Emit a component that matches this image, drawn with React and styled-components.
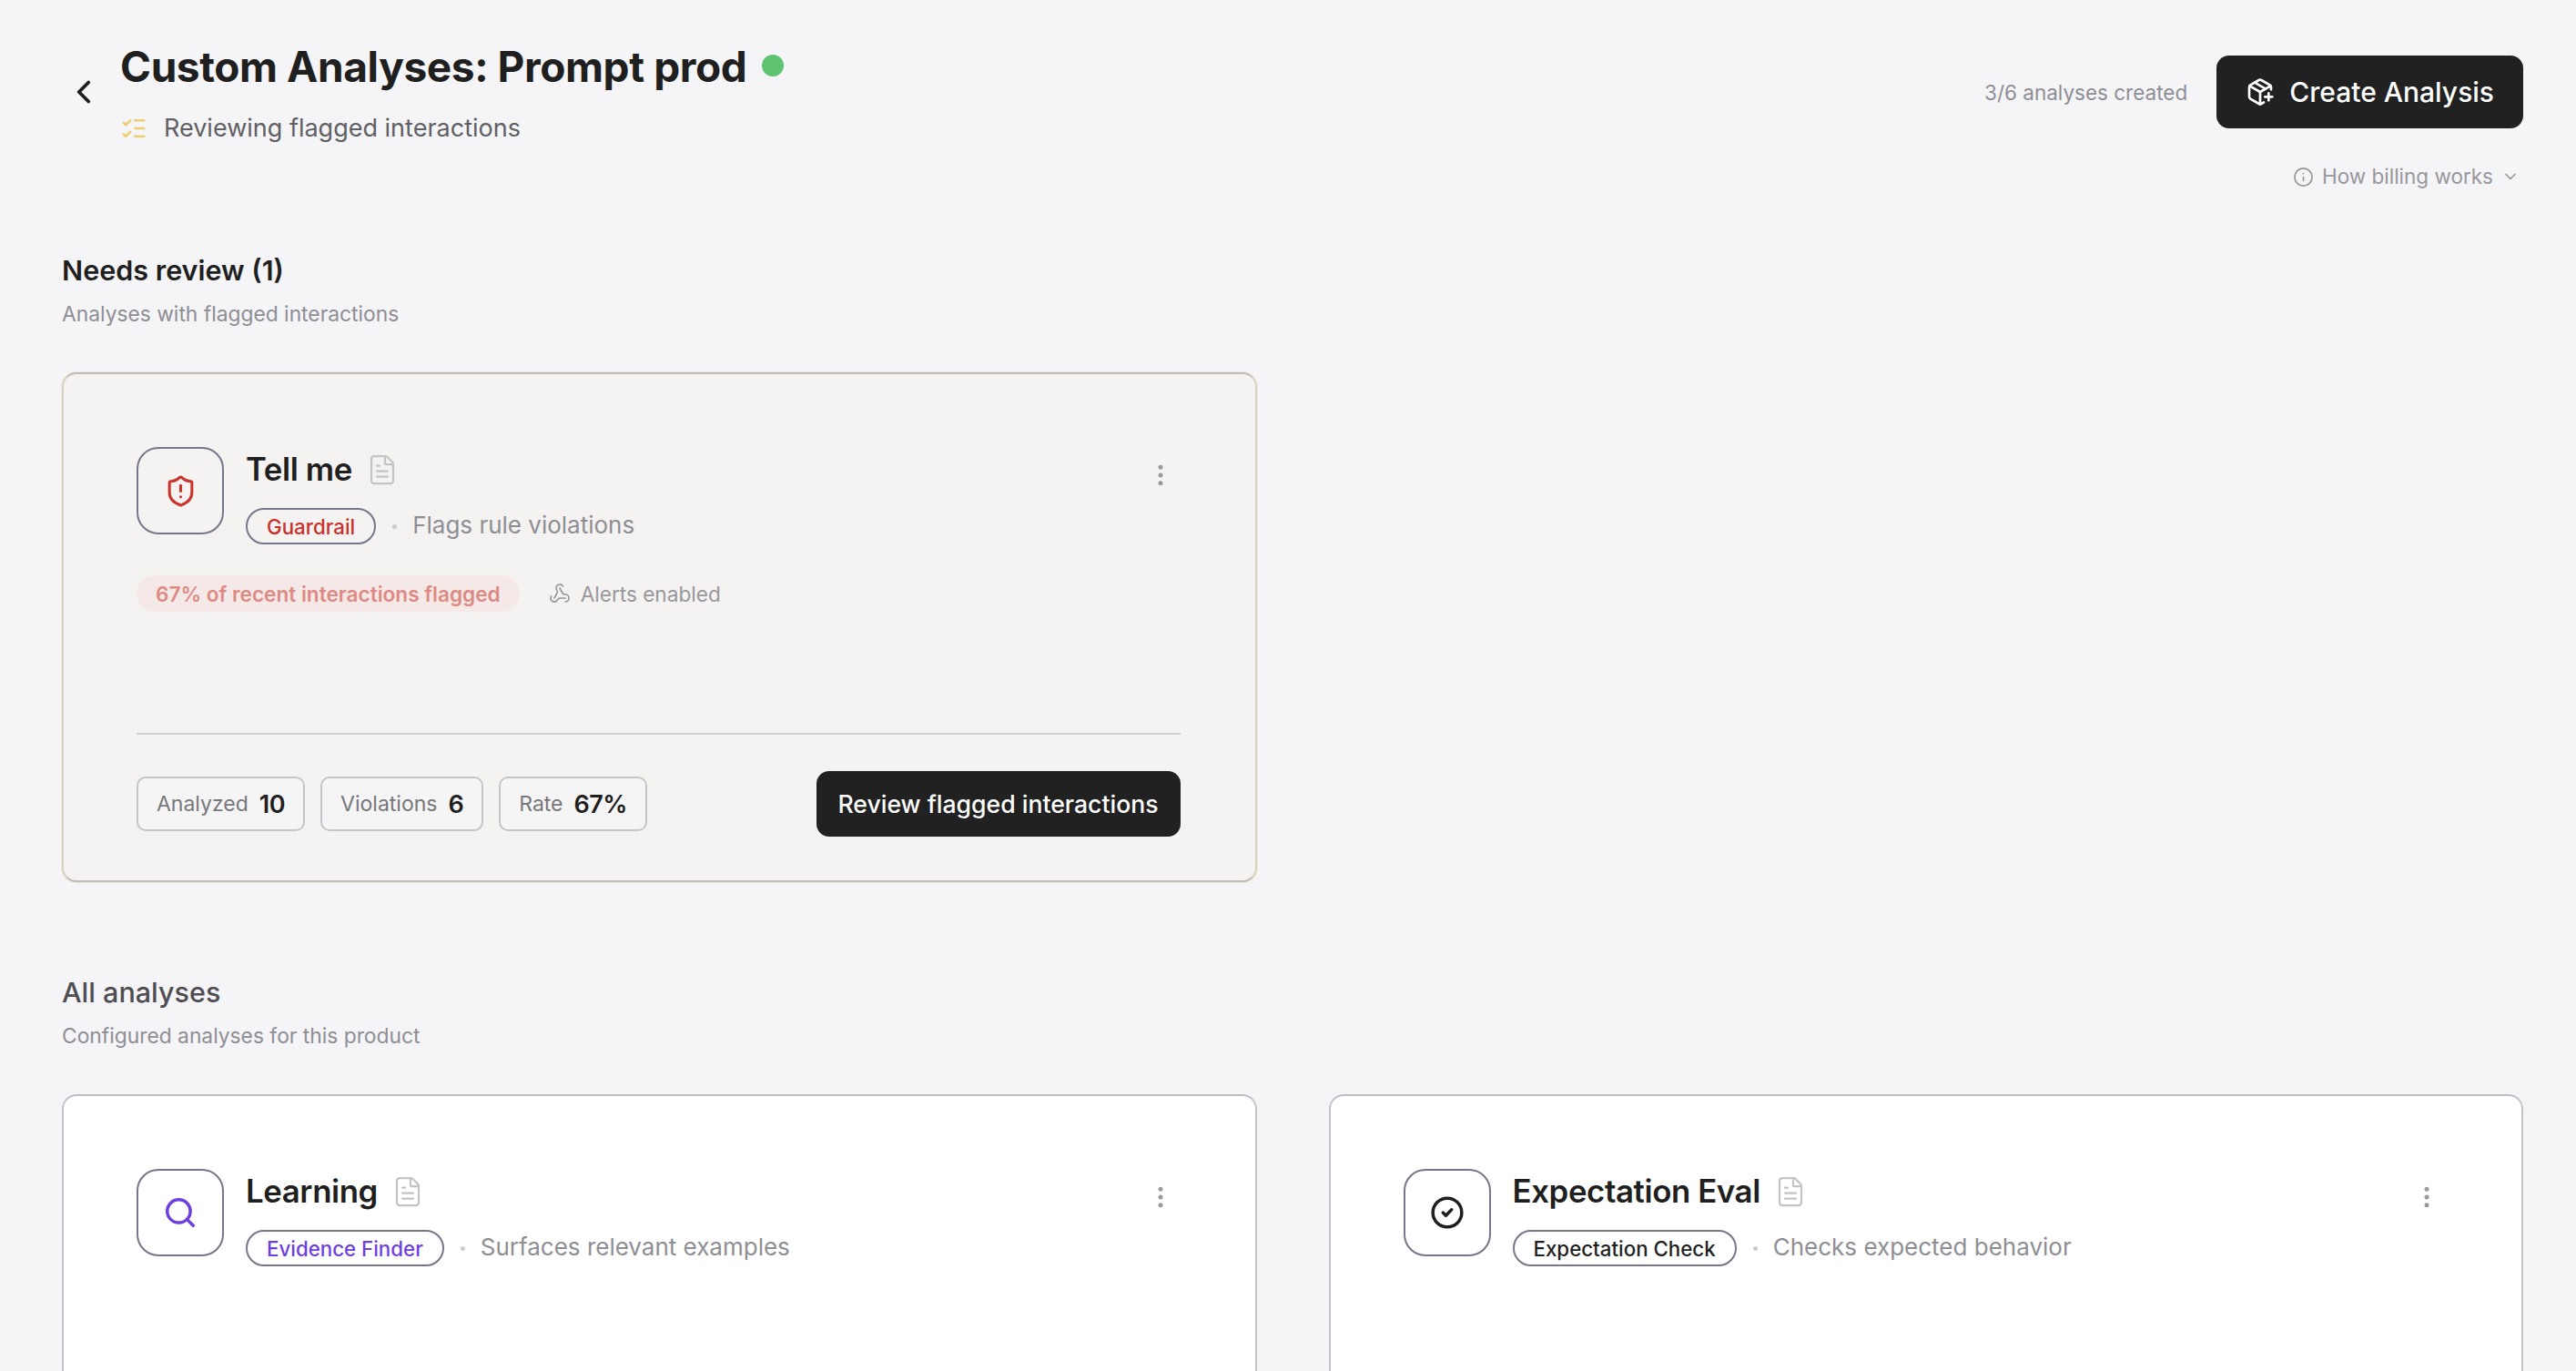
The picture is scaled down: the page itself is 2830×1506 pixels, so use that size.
import React from "react";
import styled, { createGlobalStyle } from "styled-components";
import {
  ChevronLeft,
  ChevronDown,
  ListChecks,
  PackagePlus,
  Info,
  ShieldAlert,
  FileText,
  EllipsisVertical,
  Webhook,
  Search,
  CircleCheck,
} from "lucide-react";

const Global = createGlobalStyle`
  html, body {
    margin: 0;
    height: 100%;
    overflow: hidden;
    background: #f5f5f7;
    font-family: Inter, "Noto Sans", sans-serif;
  }
  * { box-sizing: border-box; }
`;

export default function App() {
  return (
    <Page>
      <Global />
      <Header>
        <HeaderLeft>
          <BackButton>
            <ChevronLeft size={42} strokeWidth={2.2} />
          </BackButton>
          <div>
            <TitleRow>
              <Title>Custom Analyses: Prompt prod</Title>
              <StatusDot />
            </TitleRow>
            <Status>
              <ListChecks size={30} color="#efcd72" strokeWidth={2} />
              Reviewing flagged interactions
            </Status>
          </div>
        </HeaderLeft>
        <HeaderRight>
          <CreateRow>
            <Quota>3/6 analyses created</Quota>
            <CreateButton>
              <PackagePlus size={32} strokeWidth={2} />
              Create Analysis
            </CreateButton>
          </CreateRow>
          <Billing>
            <Info size={23} strokeWidth={1.8} />
            How billing works
            <ChevronDown size={20} strokeWidth={2} />
          </Billing>
        </HeaderRight>
      </Header>

      <Section>
        <Heading>Needs review (1)</Heading>
        <SubHeading>Analyses with flagged interactions</SubHeading>
        <CardGrid>
          <Card $flagged>
            <CardTop
              icon={<ShieldAlert size={37} color="#c9352d" strokeWidth={2} />}
              name="Tell me"
              tag="Guardrail"
              tagColor="#c9302a"
              desc="Flags rule violations"
            />
            <InfoRow>
              <FlagPill>67% of recent interactions flagged</FlagPill>
              <Alerts>
                <Webhook size={24} strokeWidth={1.7} />
                Alerts enabled
              </Alerts>
            </InfoRow>
            <Divider />
            <CardFooter>
              <Stats>
                <Stat>Analyzed <b>10</b></Stat>
                <Stat>Violations <b>6</b></Stat>
                <Stat>Rate <b>67%</b></Stat>
              </Stats>
              <ReviewButton>Review flagged interactions</ReviewButton>
            </CardFooter>
          </Card>
        </CardGrid>
      </Section>

      <AllSection>
        <Heading $muted>All analyses</Heading>
        <SubHeading>Configured analyses for this product</SubHeading>
        <CardGrid>
          <Card>
            <CardTop
              icon={<Search size={38} color="#6d3fe0" strokeWidth={2.2} />}
              name="Learning"
              tag="Evidence Finder"
              tagColor="#6d3fe0"
              desc="Surfaces relevant examples"
            />
          </Card>
          <Card>
            <CardTop
              icon={<CircleCheck size={38} color="#1f1f1f" strokeWidth={2.2} />}
              name="Expectation Eval"
              tag="Expectation Check"
              tagColor="#1f1f1f"
              desc="Checks expected behavior"
            />
          </Card>
        </CardGrid>
      </AllSection>
    </Page>
  );
}

function CardTop({ icon, name, tag, tagColor, desc }) {
  return (
    <TopRow>
      <IconBox>{icon}</IconBox>
      <TopText>
        <NameRow>
          <Name>{name}</Name>
          <FileText size={36} color="#c4c4c6" strokeWidth={1.5} />
        </NameRow>
        <TagRow>
          <Tag $color={tagColor}>{tag}</Tag>
          <Dot />
          <Desc>{desc}</Desc>
        </TagRow>
      </TopText>
      <Kebab>
        <EllipsisVertical size={30} strokeWidth={2} />
      </Kebab>
    </TopRow>
  );
}

const Page = styled.div`
  padding: 40px 58px 0 68px;
  height: 1506px;
  overflow: hidden;
  color: #1f1f1f;
`;

const Header = styled.header`
  display: flex;
  justify-content: space-between;
  align-items: flex-start;
`;

const HeaderLeft = styled.div`
  display: flex;
  align-items: center;
  gap: 19px;
`;

const BackButton = styled.div`
  width: 45px;
  display: flex;
  justify-content: flex-end;
  color: #1f1f1f;
`;

const TitleRow = styled.div`
  display: flex;
  align-items: center;
  gap: 17px;
`;

const Title = styled.h1`
  margin: 0;
  font-size: 46px;
  line-height: 66px;
  font-weight: 700;
  letter-spacing: -0.4px;
`;

const StatusDot = styled.span`
  width: 24px;
  height: 24px;
  border-radius: 50%;
  background: #5ec46f;
  margin-bottom: 2px;
`;

const Status = styled.div`
  display: flex;
  align-items: center;
  gap: 18px;
  margin-top: 15px;
  font-size: 27px;
  line-height: 40px;
  color: #5f5f64;
`;

const HeaderRight = styled.div`
  display: flex;
  flex-direction: column;
  align-items: flex-end;
  padding-top: 21px;
`;

const CreateRow = styled.div`
  display: flex;
  align-items: center;
  gap: 32px;
`;

const Quota = styled.span`
  font-size: 22.5px;
  color: #8e8e94;
`;

const CreateButton = styled.button`
  display: flex;
  align-items: center;
  gap: 16px;
  height: 80px;
  padding: 0 32px;
  border: none;
  border-radius: 14px;
  background: #212121;
  color: #fff;
  font-family: inherit;
  font-size: 30px;
  font-weight: 500;
`;

const Billing = styled.div`
  display: flex;
  align-items: center;
  gap: 9px;
  margin-top: 38px;
  padding-right: 4px;
  font-size: 22.5px;
  line-height: 30px;
  color: #97979c;
`;

const Section = styled.section`
  margin-top: 66px;
`;

const AllSection = styled.section`
  margin-top: 99px;
`;

const Heading = styled.h2`
  margin: 0;
  font-size: ${(p) => (p.$muted ? "30.5px" : "30.5px")};
  line-height: 44px;
  font-weight: ${(p) => (p.$muted ? 500 : 600)};
  color: ${(p) => (p.$muted ? "#4d4d52" : "#1f1f1f")};
`;

const SubHeading = styled.p`
  margin: 8px 0 0;
  font-size: 22.8px;
  line-height: 36px;
  color: #8e8e94;
`;

const CardGrid = styled.div`
  display: grid;
  grid-template-columns: repeat(2, 1fr);
  gap: 79px;
  margin-top: 46px;
`;

const Card = styled.article`
  display: flex;
  flex-direction: column;
  height: 560px;
  padding: 80px 82px 0 80px;
  border-radius: 16px;
  border: 2px solid ${(p) => (p.$flagged ? "#d8d2c6" : "#c4c4cb")};
  border-top-color: ${(p) => (p.$flagged ? "#bdbbbd" : "#bcbcc4")};
  border-bottom-color: ${(p) => (p.$flagged ? "#bdbbbd" : "#c4c4cb")};
  background: ${(p) => (p.$flagged ? "#f4f3f2" : "#fff")};
  box-shadow: ${(p) => (p.$flagged ? "0 0 0 1px #f0e6d2" : "none")};
`;

const TopRow = styled.div`
  display: flex;
  align-items: flex-start;
  gap: 24px;
`;

const IconBox = styled.div`
  width: 96px;
  height: 96px;
  flex: none;
  display: flex;
  align-items: center;
  justify-content: center;
  border: 2px solid #76768a;
  border-radius: 24px;
`;

const TopText = styled.div`
  flex: 1;
`;

const NameRow = styled.div`
  display: flex;
  align-items: center;
  gap: 15px;
  height: 50px;
`;

const Name = styled.span`
  font-size: 34.8px;
  font-weight: 600;
  letter-spacing: -0.4px;
  margin-bottom: 3px;
`;

const TagRow = styled.div`
  display: flex;
  align-items: center;
  margin-top: 17px;
`;

const Tag = styled.span`
  height: 40px;
  padding: 0 21px;
  display: flex;
  align-items: center;
  border: 2px solid #76768a;
  border-radius: 20px;
  font-size: 22.3px;
  font-weight: 500;
  color: ${(p) => p.$color};
`;

const Dot = styled.span`
  width: 5px;
  height: 5px;
  margin: 0 17px 0 18px;
  border-radius: 50%;
  background: #ccccce;
`;

const Desc = styled.span`
  font-size: 26px;
  color: #8e8e94;
  margin-bottom: 3px;
`;

const Kebab = styled.div`
  color: #9a9a9e;
  margin: 16px 7px 0 0;
  display: flex;
`;

const InfoRow = styled.div`
  display: flex;
  align-items: center;
  gap: 32px;
  margin-top: 34px;
`;

const FlagPill = styled.span`
  height: 40px;
  padding: 0 21px;
  display: flex;
  align-items: center;
  border-radius: 20px;
  background: #f5e9e7;
  color: #de8a84;
  font-size: 22.6px;
  font-weight: 600;
`;

const Alerts = styled.span`
  display: flex;
  align-items: center;
  gap: 11px;
  font-size: 22.6px;
  color: #97979c;
`;

const Divider = styled.hr`
  width: 100%;
  margin: 133px 0 0;
  border: none;
  height: 2px;
  background: #d0d0d2;
`;

const CardFooter = styled.div`
  display: flex;
  align-items: center;
  justify-content: space-between;
  margin-top: 40px;
`;

const Stats = styled.div`
  display: flex;
  gap: 17px;
`;

const Stat = styled.span`
  height: 60px;
  padding: 0 20px;
  display: flex;
  align-items: center;
  gap: 12px;
  border: 2px solid #c4c4ca;
  border-radius: 10px;
  background: #f5f5f5;
  font-size: 23px;
  color: #77777c;

  b {
    font-size: 27px;
    font-weight: 600;
    letter-spacing: -0.5px;
    color: #1f1f1f;
  }
`;

const ReviewButton = styled.button`
  height: 72px;
  width: 400px;
  border: none;
  border-radius: 14px;
  background: #212121;
  color: #fff;
  font-family: inherit;
  font-size: 26.6px;
  font-weight: 500;
`;
